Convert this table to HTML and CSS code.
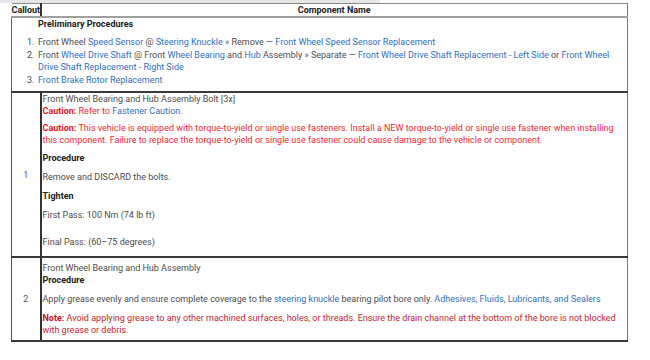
FILE: index.html
```html
<!DOCTYPE html>
<html>
<head>
<meta charset="utf-8">
<link rel="stylesheet" href="styles.css">
</head>
<body>
<div class="topband"></div>
<table class="proc">
  <thead>
    <tr>
      <th class="h-callout">Callout</th>
      <th class="h-name">Component Name</th>
    </tr>
  </thead>
  <tbody>
    <tr class="prelim">
      <td colspan="2">
        <div class="prelim-title">Preliminary Procedures</div>
        <ol class="prelim-list">
          <li>Front Wheel <a>Speed Sensor</a> @ <a>Steering Knuckle</a> » Remove — <a>Front Wheel Speed Sensor Replacement</a></li>
          <li>Front <a>Wheel Drive Shaft</a> @ Front <a>Wheel Bearing</a> and <a>Hub</a> Assembly » Separate — <a>Front Wheel Drive Shaft Replacement - Left Side</a> or <a>Front Wheel Drive Shaft Replacement - Right Side</a></li>
          <li><a>Front Brake Rotor Replacement</a></li>
        </ol>
      </td>
    </tr>
    <tr class="step step1">
      <td class="num">1</td>
      <td class="body">
        <div class="line">Front Wheel Bearing and Hub Assembly Bolt [3x]</div>
        <div class="line caution"><b>Caution:</b> Refer to <a>Fastener Caution</a>.</div>
        <p class="caution c2"><b>Caution:</b> This vehicle is equipped with torque-to-yield or single use fasteners. Install a NEW torque-to-yield or single use fastener when installing this component. Failure to replace the torque-to-yield or single use fastener could cause damage to the vehicle or component.</p>
        <p class="head proc-head">Procedure</p>
        <p>Remove and DISCARD the bolts.</p>
        <p class="head">Tighten</p>
        <p>First Pass: 100 Nm (74 lb ft)</p>
        <p class="final">Final Pass: (60–75 degrees)</p>
      </td>
    </tr>
    <tr class="step step2">
      <td class="num">2</td>
      <td class="body">
        <div class="line">Front Wheel Bearing and Hub Assembly</div>
        <div class="line head">Procedure</div>
        <p>Apply grease evenly and ensure complete coverage to the <a>steering knuckle</a> bearing pilot bore only. <a>Adhesives, Fluids, Lubricants, and Sealers</a></p>
        <p class="note"><b>Note:</b> Avoid applying grease to any other machined surfaces, holes, or threads. Ensure the drain channel at the bottom of the bore is not blocked with grease or debris.</p>
      </td>
    </tr>
  </tbody>
</table>
</body>
</html>
```
FILE: styles.css
```css
html, body {
  margin: 0;
  padding: 0;
  background: #ffffff;
}
body {
  font-family: Roboto, "Liberation Sans", sans-serif;
  font-size: 9px;
  line-height: 12px;
  color: #4d4d4d;
}
.topband {
  height: 3px;
  width: 380px;
  background: #e6e6e6;
}
.proc {
  margin-left: 11px;
  width: 617px;
  border-collapse: collapse;
  table-layout: fixed;
}
.proc th {
  font-weight: bold;
  color: #222;
  height: 12px;
  padding: 0;
  border-top: 1px solid #8a8a8a;
  border-bottom: 2px solid #a0a0a0;
  line-height: 12px;
}
.h-callout {
  width: 28px;
  text-align: left;
  border-right: 2px solid #333;
}
.h-name {
  text-align: center;
  border-right: 1px solid #777;
}
.proc td {
  padding: 0;
  vertical-align: top;
}
.proc .prelim td {
  border-left: 1px solid #666;
  border-right: 1px solid #777;
  padding: 0 0 5px 26px;
}
.prelim-title {
  font-weight: bold;
  color: #222;
}
.prelim-list {
  margin: 6px 0 0 0;
  padding: 0;
  list-style: none;
  counter-reset: item;
}
.prelim-list li {
  line-height: 12.5px;
  counter-increment: item;
  position: relative;
}
.prelim-list li::before {
  content: counter(item) ".";
  position: absolute;
  left: -11px;
  color: #4d4d4d;
}
a {
  color: #2f6fbf;
  text-decoration: none;
}
.step td {
  border-top: 2px solid #3a3a3a;
}
.step2 td {
  border-bottom: 2px solid #3a3a3a;
}
.proc .num {
  border-left: 1px solid #555;
  border-right: 2px solid #333;
  text-align: center;
  vertical-align: middle;
  color: #555;
}
.proc .body {
  border-right: 1px solid #777;
}
.proc .step1 .body {
  padding: 0 0 8px 1px;
}
.proc .step2 .body {
  padding: 4px 0 4px 1px;
}
.body p {
  margin: 7px 0 0 0;
}
.body .c2 {
  margin-top: 5px;
}
.body .proc-head {
  margin-top: 6px;
}
.body .final {
  margin-top: 15px;
}
.head {
  font-weight: bold;
  color: #222;
}
.caution {
  color: #ee2a33;
}
.caution b {
  color: #e01b24;
}
.note {
  color: #c4262e;
}
.note b {
  color: #c0141c;
}
```
